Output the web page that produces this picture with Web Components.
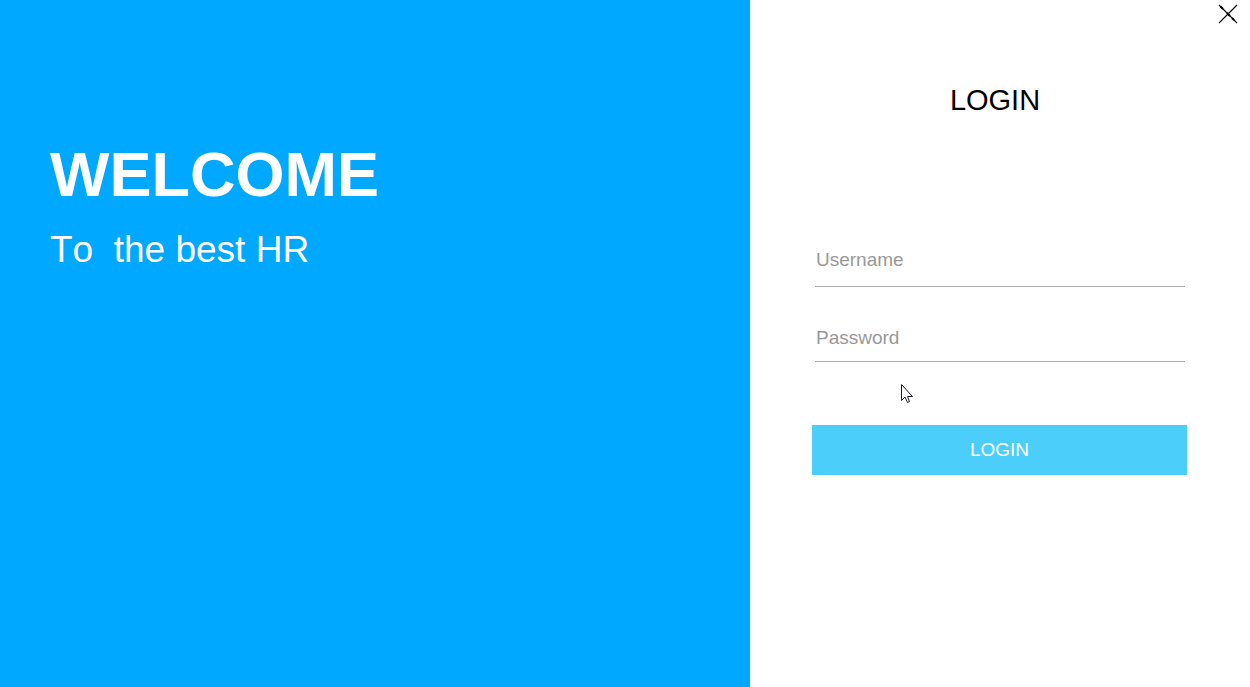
<!DOCTYPE html>
<html lang="en">
<head>
<meta charset="utf-8">
<title>Login</title>
<style>
  body { margin: 0; background: #fff; font-family: "Liberation Sans", Arial, sans-serif; font-kerning: none; }
</style>
</head>
<body>
<login-page>
  <welcome-panel slot="welcome" heading="WELCOME">To&nbsp; the best HR</welcome-panel>
  <login-panel slot="login" heading="LOGIN">
    <line-field name="username" type="text" label="Username"></line-field>
    <line-field name="password" type="password" label="Password" compact></line-field>
    <submit-button slot="action">LOGIN</submit-button>
  </login-panel>
</login-page>

<script>
const define = (name, markup, setup) => customElements.define(name, class extends HTMLElement {
  constructor() {
    super();
    this.attachShadow({ mode: 'open' }).innerHTML = markup;
  }
  connectedCallback() { if (setup) setup(this, this.shadowRoot); }
});

define('login-page', `
  <style>
    :host { display: grid; grid-template-columns: 3fr 2fr; min-height: 100vh; }
  </style>
  <slot name="welcome"></slot>
  <slot name="login"></slot>`);

define('welcome-panel', `
  <style>
    :host { display: block; box-sizing: border-box; padding: 136px 50px 48px; background: #00a8ff; color: #fff; }
    h1 { margin: 0; font-size: 63px; line-height: 76px; font-weight: bold; }
    p { margin: 16px 0 0; font-size: 37px; line-height: 44px; }
  </style>
  <h1></h1>
  <p><slot></slot></p>`, (el, root) => {
    root.querySelector('h1').textContent = el.getAttribute('heading');
  });

define('login-panel', `
  <style>
    :host { display: block; position: relative; background: #fff; }
    header { display: flex; justify-content: flex-end; padding: 4px 12px 0 0; }
    button { display: block; width: 20px; height: 20px; margin: 0; padding: 0; border: 0; background: none; }
    svg { display: block; }
    h2 { margin: 60px 10px 0 0; font-size: 29px; line-height: 32px; font-weight: normal; text-align: center; color: #000; }
    form { margin: 131px 63px 0 62px; }
    .fields { display: grid; gap: 35px; margin: 0 2px 63px 3px; }
    .pointer { position: absolute; left: 150px; top: 383px; pointer-events: none; }
  </style>
  <header>
    <button type="button" aria-label="Close">
      <svg width="20" height="20" viewBox="0 0 20 20" fill="none" stroke="#000">
        <path d="M1 1L19 19M19 1L1 19" stroke-width="1.1"/>
        <path d="M2.500 2.500L5 5M9 9l3 3M14 14l2 2" stroke-width="1.900"/>
      </svg>
    </button>
  </header>
  <h2></h2>
  <form>
    <div class="fields"><slot></slot></div>
    <slot name="action"></slot>
  </form>
  <svg class="pointer" width="14" height="21" viewBox="0 0 14 21" aria-hidden="true">
    <path d="M1.5 1.5V17.5L5 14L7.500 19.500L9.500 18.500L7.500 13.500H12.500Z" fill="#fff" stroke="#1c1828"/>
  </svg>`, (el, root) => {
    root.querySelector('h2').textContent = el.getAttribute('heading');
  });

define('line-field', `
  <style>
    :host { display: block; --space: 14px; }
    :host([compact]) { --space: 8px; }
    input { display: block; box-sizing: border-box; width: 100%; height: 40px; margin: 0; padding: 0 0 var(--space) 1px; border: 0;
      border-bottom: 1px solid #acacac; border-radius: 0; outline: 0; background: none; font: 19px "Liberation Sans", Arial, sans-serif; color: #333; }
    input::placeholder { color: #999; opacity: 1; }
  </style>
  <input>`, (el, root) => {
    const input = root.querySelector('input');
    const label = el.getAttribute('label');
    input.type = el.getAttribute('type');
    input.name = el.getAttribute('name');
    input.placeholder = label;
    input.setAttribute('aria-label', label);
  });

define('submit-button', `
  <style>
    :host { display: block; }
    button { display: block; width: 100%; height: 50px; margin: 0; padding: 0; border: 0; background: #4bcffa; color: #fff;
      font: 19px "Liberation Sans", Arial, sans-serif; }
  </style>
  <button type="submit"><slot></slot></button>`);
</script>
</body>
</html>
